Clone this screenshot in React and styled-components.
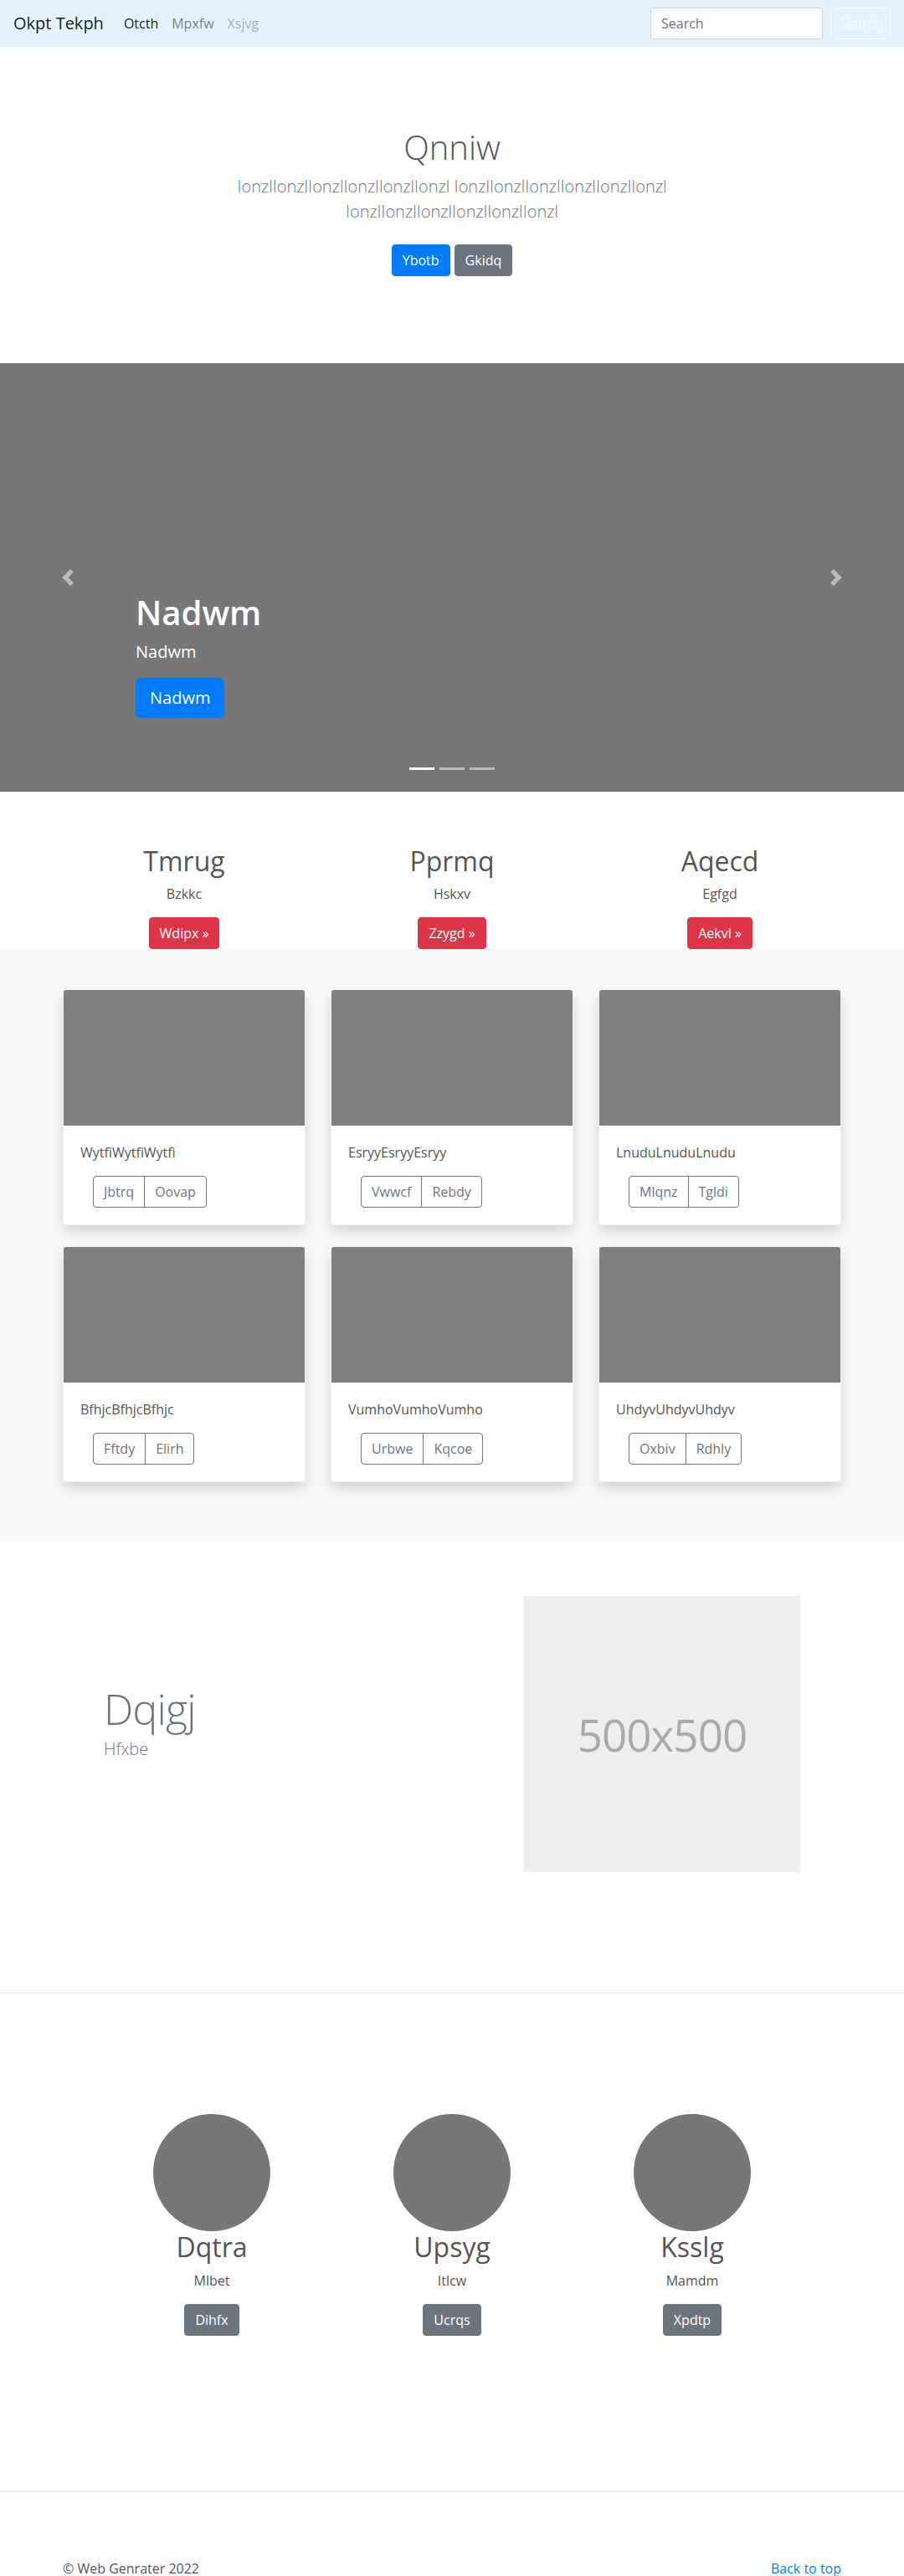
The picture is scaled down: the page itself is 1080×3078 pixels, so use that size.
import React from 'react'
import styled, { createGlobalStyle } from 'styled-components'

const GlobalStyle = createGlobalStyle`
    * { box-sizing: border-box; }
    body {
        margin: 0;
        font-family: "Open Sans", "Noto Sans", Arial, sans-serif;
        font-size: 16px;
        line-height: 1.5;
        color: #555;
        background: #fff;
    }
    h1, h2, p { margin-top: 0; }
`

const Navbar = styled.nav`
    display: flex;
    align-items: center;
    height: 56px;
    padding: 0 16px;
    background: #e3f2fd;
`

const Brand = styled.a`
    margin-right: 16px;
    font-size: 20px;
    line-height: 30px;
    color: rgba(0, 0, 0, .9);
    text-decoration: none;
`

const NavLink = styled.a`
    padding: 8px;
    font-size: 16px;
    color: ${props => props.active ? 'rgba(0, 0, 0, .9)' : props.disabled ? 'rgba(0, 0, 0, .3)' : 'rgba(0, 0, 0, .5)'};
    text-decoration: none;
`

const SearchForm = styled.form`
    display: flex;
    align-items: center;
    gap: 9px;
    margin-left: auto;
`

const SearchInput = styled.input`
    width: 206px;
    height: 38px;
    padding: 6px 12px;
    border: 1px solid #ced4da;
    border-radius: 4px;
    font-family: inherit;
    font-size: 16px;
    color: #495057;
    background: #fff;
    &::placeholder { color: #6c757d; }
`

const OutlineLight = styled.button`
    width: 72px;
    height: 38px;
    padding: 6px 10px;
    border: 1px solid #f8f9fa;
    border-radius: 4px;
    font-family: inherit;
    font-size: 16px;
    color: #f8f9fa;
    background: transparent;
`

const Btn = styled.a`
    display: inline-block;
    padding: ${props => props.large ? '8px 16px' : '6px 12px'};
    border: 1px solid ${props => props.bg};
    border-radius: ${props => props.large ? '6px' : '4px'};
    font-size: ${props => props.large ? '20px' : '16px'};
    line-height: 1.5;
    color: #fff;
    background: ${props => props.bg};
    text-decoration: none;
`

const Hero = styled.section`
    padding: 96px 0;
    text-align: center;
`

const HeroInner = styled.div`
    max-width: 640px;
    margin: 0 auto;
    padding: 0 15px;
`

const HeroTitle = styled.h1`
    margin-bottom: 8px;
    font-size: 40px;
    font-weight: 300;
    line-height: 1.2;
    color: #555;
`

const Lead = styled.p`
    margin-bottom: ${props => props.tight ? '0' : '16px'};
    font-size: 20px;
    font-weight: 300;
    line-height: 1.5;
    color: #6c757d;
`

const HeroButtons = styled.div`
    display: flex;
    justify-content: center;
    gap: 5px;
    padding: 8px 0;
`

const Carousel = styled.div`
    position: relative;
    height: 512px;
    background: #777;
    overflow: hidden;
`

const Caption = styled.div`
    display: flex;
    flex-direction: column;
    justify-content: flex-end;
    align-items: flex-start;
    height: 100%;
    padding: 0 15% 88px;
    color: #fff;
`

const CaptionTitle = styled.h1`
    margin-bottom: 8px;
    font-size: 40px;
    font-weight: 600;
    line-height: 1.2;
`

const CaptionText = styled.p`
    margin-bottom: 16px;
    font-size: 20px;
    line-height: 1.5;
`

const Control = styled.a`
    position: absolute;
    top: 0;
    bottom: 0;
    ${props => props.side}: 0;
    display: flex;
    align-items: center;
    justify-content: center;
    width: 15%;
    opacity: .5;
`

const Indicators = styled.ol`
    position: absolute;
    left: 0;
    right: 0;
    bottom: 26px;
    display: flex;
    justify-content: center;
    gap: 6px;
    margin: 0;
    padding: 0;
    list-style: none;
`

const Indicator = styled.li`
    width: 30px;
    height: 3px;
    background: ${props => props.active ? '#fff' : 'rgba(255, 255, 255, .5)'};
`

const Marketing = styled.section`
    display: grid;
    grid-template-columns: repeat(3, 320px);
    justify-content: center;
    padding-top: 64px;
    text-align: center;
`

const MarketingCol = styled.div`
    padding: 0 15px;
    h2 {
        margin-bottom: 8px;
        font-size: 32px;
        font-weight: 500;
        line-height: 1.2;
        color: #555;
    }
    p { margin-bottom: 16px; }
`

const ButtonRow = styled.div`
    display: flex;
    justify-content: center;
`

const Album = styled.section`
    padding: 48px 0 72px;
    background: #f8f9fa;
`

const CardGrid = styled.div`
    display: grid;
    grid-template-columns: repeat(3, 290px);
    justify-content: center;
    column-gap: 30px;
    row-gap: 25px;
`

const Card = styled.div`
    border: 1px solid rgba(0, 0, 0, .06);
    border-radius: 4px;
    background: #fff;
    box-shadow: 0 8px 16px rgba(0, 0, 0, .15);
    overflow: hidden;
`

const CardImage = styled.div`
    height: 162px;
    background: #7f7f7f;
`

const CardBody = styled.div`
    padding: 20px;
    p {
        margin-bottom: 16px;
        color: #555;
    }
`

const BtnGroup = styled.div`
    display: inline-flex;
    margin-left: 15px;
`

const OutlineBtn = styled.button`
    padding: 6px 12px;
    border: 1px solid #6c757d;
    border-radius: ${props => props.first ? '4px 0 0 4px' : '0 4px 4px 0'};
    margin-left: ${props => props.first ? '0' : '-1px'};
    font-family: inherit;
    font-size: 16px;
    line-height: 1.5;
    color: #6c757d;
    background: transparent;
`

const Featurette = styled.section`
    display: flex;
    align-items: center;
    justify-content: space-between;
    width: 832px;
    margin: 0 auto;
    padding: 64px 0;
`

const FeaturetteText = styled.div`
    padding-bottom: 22px;
`

const FeaturetteHeading = styled.h2`
    margin-bottom: 8px;
    font-size: 50px;
    font-weight: 300;
    line-height: 1;
    letter-spacing: -.8px;
    color: #6c757d;
`

const Placeholder = styled.div`
    display: flex;
    align-items: center;
    justify-content: center;
    width: 330px;
    height: 330px;
    font-size: 53px;
    letter-spacing: -1px;
    color: #aaa;
    background: #eee;
`

const Divider = styled.hr`
    margin: 80px 0;
    border: 0;
    border-top: 1px solid rgba(0, 0, 0, .1);
`

const Team = styled.section`
    display: grid;
    grid-template-columns: repeat(3, 287px);
    justify-content: center;
    padding: 64px 0 105px;
    text-align: center;
`

const Member = styled.div`
    display: flex;
    flex-direction: column;
    align-items: center;
    h2 {
        margin-bottom: 8px;
        font-size: 32px;
        font-weight: 400;
        line-height: 1.2;
        color: #555;
    }
    p { margin-bottom: 16px; }
`

const Avatar = styled.div`
    width: 140px;
    height: 140px;
    border-radius: 50%;
    background: #777;
`

const Footer = styled.footer`
    display: flex;
    justify-content: space-between;
    width: 930px;
    margin: 0 auto;
    p { margin: 0; }
    a {
        color: #007bff;
        text-decoration: none;
    }
`

const cards = [
    ['WytfiWytfiWytfi', 'Jbtrq', 'Oovap'],
    ['EsryyEsryyEsryy', 'Vwwcf', 'Rebdy'],
    ['LnuduLnuduLnudu', 'Mlqnz', 'Tgldi'],
    ['BfhjcBfhjcBfhjc', 'Fftdy', 'Elirh'],
    ['VumhoVumhoVumho', 'Urbwe', 'Kqcoe'],
    ['UhdyvUhdyvUhdyv', 'Oxbiv', 'Rdhly'],
]

const marketing = [
    ['Tmrug', 'Bzkkc', 'Wdipx'],
    ['Pprmq', 'Hskxv', 'Zzygd'],
    ['Aqecd', 'Egfgd', 'Aekvl'],
]

const team = [
    ['Dqtra', 'Mlbet', 'Dihfx'],
    ['Upsyg', 'Itlcw', 'Ucrqs'],
    ['Ksslg', 'Mamdm', 'Xpdtp'],
]

const word = 'IonzlIonzlIonzlIonzlIonzlIonzl'

export default function App() {
    return (
        <>
            <GlobalStyle />
            <Navbar>
                <Brand href="#">Okpt Tekph</Brand>
                <NavLink href="#" active>Otcth</NavLink>
                <NavLink href="#">Mpxfw</NavLink>
                <NavLink href="#" disabled>Xsjvg</NavLink>
                <SearchForm onSubmit={e => e.preventDefault()}>
                    <SearchInput type="search" placeholder="Search" />
                    <OutlineLight type="submit">Search</OutlineLight>
                </SearchForm>
            </Navbar>

            <Hero>
                <HeroInner>
                    <HeroTitle>Qnniw</HeroTitle>
                    <Lead>{word} {word} {word}</Lead>
                    <HeroButtons>
                        <Btn href="#" bg="#007bff">Ybotb</Btn>
                        <Btn href="#" bg="#6c757d">Gkidq</Btn>
                    </HeroButtons>
                </HeroInner>
            </Hero>

            <Carousel>
                <Caption>
                    <CaptionTitle>Nadwm</CaptionTitle>
                    <CaptionText>Nadwm</CaptionText>
                    <Btn href="#" large bg="#007bff">Nadwm</Btn>
                </Caption>
                <Control href="#" side="left">
                    <svg width="20" height="20" viewBox="0 0 8 8" fill="#fff">
                        <path d="M5.25 0l-4 4 4 4 1.5-1.5L4.25 4l2.5-2.5L5.25 0z" />
                    </svg>
                </Control>
                <Control href="#" side="right">
                    <svg width="20" height="20" viewBox="0 0 8 8" fill="#fff">
                        <path d="M2.75 0l-1.5 1.5L3.75 4l-2.5 2.5L2.75 8l4-4-4-4z" />
                    </svg>
                </Control>
                <Indicators>
                    <Indicator active />
                    <Indicator />
                    <Indicator />
                </Indicators>
            </Carousel>

            <Marketing>
                {marketing.map(([title, text, action]) => (
                    <MarketingCol key={title}>
                        <h2>{title}</h2>
                        <p>{text}</p>
                        <ButtonRow>
                            <Btn href="#" bg="#dc3545">{action} &raquo;</Btn>
                        </ButtonRow>
                    </MarketingCol>
                ))}
            </Marketing>

            <Album>
                <CardGrid>
                    {cards.map(([text, a, b]) => (
                        <Card key={text}>
                            <CardImage />
                            <CardBody>
                                <p>{text}</p>
                                <BtnGroup>
                                    <OutlineBtn first>{a}</OutlineBtn>
                                    <OutlineBtn>{b}</OutlineBtn>
                                </BtnGroup>
                            </CardBody>
                        </Card>
                    ))}
                </CardGrid>
            </Album>

            <Featurette>
                <FeaturetteText>
                    <FeaturetteHeading>Dqigj</FeaturetteHeading>
                    <Lead tight>Hfxbe</Lead>
                </FeaturetteText>
                <Placeholder>500x500</Placeholder>
            </Featurette>

            <Divider />

            <Team>
                {team.map(([name, role, action]) => (
                    <Member key={name}>
                        <Avatar />
                        <h2>{name}</h2>
                        <p>{role}</p>
                        <Btn href="#" bg="#6c757d">{action}</Btn>
                    </Member>
                ))}
            </Team>

            <Divider />

            <Footer>
                <p>&copy; Web Genrater 2022</p>
                <p><a href="#">Back to top</a></p>
            </Footer>
        </>
    )
}
